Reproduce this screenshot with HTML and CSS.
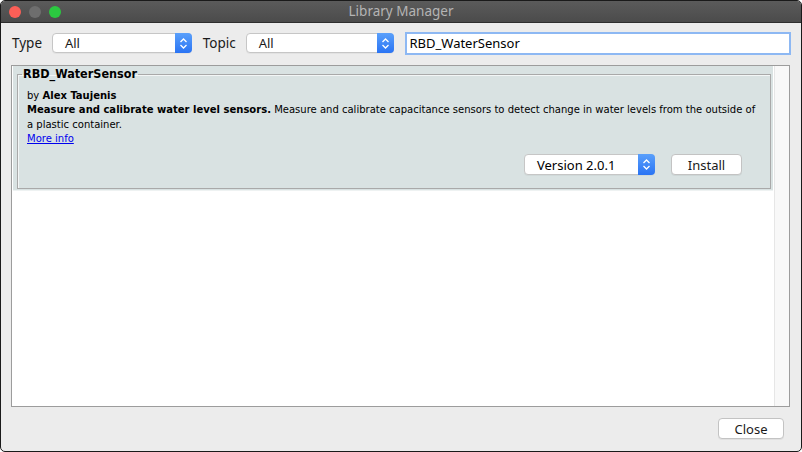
FILE: index.html
```html
<!DOCTYPE html>
<html>
<head>
<meta charset="utf-8">
<link rel="stylesheet" href="styles.css">
</head>
<body>
<div class="window">
  <div class="titlebar">
    <div class="lights">
      <span class="light red"></span>
      <span class="light gray"></span>
      <span class="light green"></span>
    </div>
    <div class="title">Library Manager</div>
  </div>
  <div class="content">
    <div class="toolbar">
      <span class="label">Type</span>
      <div class="select type-select">
        <span class="sel-text">All</span>
        <span class="stepper"><svg width="9" height="13" viewBox="0 0 9 13"><path d="M1.5 5 L4.5 2 L7.5 5 M1.5 8 L4.5 11 L7.5 8" fill="none" stroke="#fff" stroke-width="1.3"/></svg></span>
      </div>
      <span class="label topic-label">Topic</span>
      <div class="select topic-select">
        <span class="sel-text">All</span>
        <span class="stepper"><svg width="9" height="13" viewBox="0 0 9 13"><path d="M1.5 5 L4.5 2 L7.5 5 M1.5 8 L4.5 11 L7.5 8" fill="none" stroke="#fff" stroke-width="1.3"/></svg></span>
      </div>
      <div class="search">RBD_WaterSensor</div>
    </div>
    <div class="list">
      <div class="list-main">
        <div class="card">
          <fieldset class="fieldset">
            <legend class="legend">RBD_WaterSensor</legend>
            <div class="desc">
              <div>by <b>Alex Taujenis</b></div>
              <div><b>Measure and calibrate water level sensors.</b> Measure and calibrate capacitance sensors to detect change in water levels from the outside of a plastic container.</div>
              <div><a class="more" href="#">More info</a></div>
            </div>
            <div class="actions">
              <div class="select version-select">
                <span class="sel-text">Version 2.0.1</span>
                <span class="stepper"><svg width="9" height="13" viewBox="0 0 9 13"><path d="M1.5 5 L4.5 2 L7.5 5 M1.5 8 L4.5 11 L7.5 8" fill="none" stroke="#fff" stroke-width="1.3"/></svg></span>
              </div>
              <div class="button install">Install</div>
            </div>
          </fieldset>
        </div>
      </div>
      <div class="scrollbar"></div>
    </div>
    <div class="footer">
      <div class="button close">Close</div>
    </div>
  </div>
</div>
</body>
</html>
```

FILE: styles.css
```css
html, body {
  margin: 0;
  padding: 0;
  background: #ffffff;
}
.window {
  width: 802px;
  height: 452px;
  box-sizing: border-box;
  border: 1px solid #1a1a1a;
  border-radius: 5px;
  background: #ececec;
  overflow: hidden;
  display: flex;
  flex-direction: column;
  font-family: "Noto Sans", "DejaVu Sans", sans-serif;
  font-size: 13px;
  color: #1a1a1a;
}
.titlebar {
  height: 21px;
  flex: none;
  background: linear-gradient(#5b5b5b, #4b4b4b);
  border-bottom: 1px solid #2e2e2e;
  display: flex;
  align-items: center;
  position: relative;
}
.lights {
  display: flex;
  gap: 8px;
  padding-left: 8px;
}
.light {
  width: 12px;
  height: 12px;
  border-radius: 50%;
  display: block;
}
.red { background: #fc5f57; }
.gray { background: #6e6e6e; }
.green { background: #2bc840; }
.title {
  position: absolute;
  left: 0;
  right: 0;
  top: 1px;
  text-align: center;
  color: #b4b4b4;
  font-size: 13.5px;
}
.content {
  flex: 1;
  display: flex;
  flex-direction: column;
  padding: 9px 11px 0 10px;
}
.toolbar {
  display: flex;
  align-items: center;
  height: 22px;
}
.label {
  font-size: 13.5px;
  padding-left: 1px;
  width: 40px;
}
.topic-label {
  margin-left: 10px;
  width: 43px;
}
.select {
  height: 20px;
  box-sizing: border-box;
  border: 1px solid #c6c6c6;
  border-radius: 4px;
  background: #fff;
  display: flex;
  align-items: center;
  justify-content: space-between;
  box-shadow: 0 1px 0 rgba(0,0,0,0.04);
}
.sel-text {
  padding-left: 12px;
  font-size: 13px;
}
.stepper {
  width: 17px;
  height: 20px;
  margin-right: -1px;
  background: linear-gradient(#5aa0fb, #2a74f4);
  border-radius: 0 4px 4px 0;
  display: flex;
  align-items: center;
  justify-content: center;
}
.type-select { width: 140px; }
.topic-select { width: 148px; }
.search {
  margin-left: 12px;
  width: 385px;
  height: 21px;
  box-sizing: border-box;
  border: 1px solid #9a9a9a;
  outline: 2px solid #8db8f3;
  outline-offset: -1px;
  background: #fff;
  padding-left: 3px;
  line-height: 19px;
  font-size: 13px;
  color: #000;
}
.list {
  margin-top: 11px;
  height: 342px;
  box-sizing: border-box;
  border: 1px solid #9c9c9c;
  background: #fff;
  display: flex;
}
.list-main {
  flex: 1;
  padding: 0 1px 0 1px;
}
.scrollbar {
  width: 14px;
  background: #f8f8f8;
  border-left: 1px solid #e6e6e6;
}
.card {
  background: #d9e2e2;
  padding: 0 2px 1px 4px;
  border-bottom: 1px solid #eef2f2;
  font-family: "DejaVu Sans Condensed", "DejaVu Sans", sans-serif;
  font-size: 11.15px;
  color: #000;
}
.fieldset {
  margin: 0;
  border: 1px solid #a9a9a9;
  box-shadow: inset 1px 1px 0 #f3f6f6;
  padding: 0 10px 13px 9px;
  min-width: 0;
}
.legend {
  font-weight: bold;
  font-size: 12.5px;
  margin-left: -5px;
  padding: 0 1px;
  line-height: 16px;
}
.desc {
  margin-top: 7px;
  line-height: 14.3px;
}
.more {
  color: #0000ee;
  text-decoration: underline;
}
.actions {
  display: flex;
  justify-content: flex-end;
  margin-top: 8px;
  gap: 16px;
  padding-right: 18px;
}
.version-select {
  width: 131px;
  height: 21px;
  font-family: "Noto Sans", "DejaVu Sans", sans-serif;
}
.version-select .stepper { height: 21px; }
.version-select .sel-text { padding-left: 12px; }
.button {
  height: 20px;
  box-sizing: border-box;
  border: 1px solid #c3c3c3;
  border-radius: 4px;
  background: #fff;
  display: flex;
  align-items: center;
  justify-content: center;
  font-family: "Noto Sans", "DejaVu Sans", sans-serif;
  font-size: 13px;
  color: #1a1a1a;
  box-shadow: 0 1px 0 rgba(0,0,0,0.05);
}
.install { width: 71px; height: 21px; }
.footer {
  display: flex;
  justify-content: flex-end;
  padding-top: 11px;
  padding-right: 6px;
}
.close { width: 66px; height: 21px; }
```
